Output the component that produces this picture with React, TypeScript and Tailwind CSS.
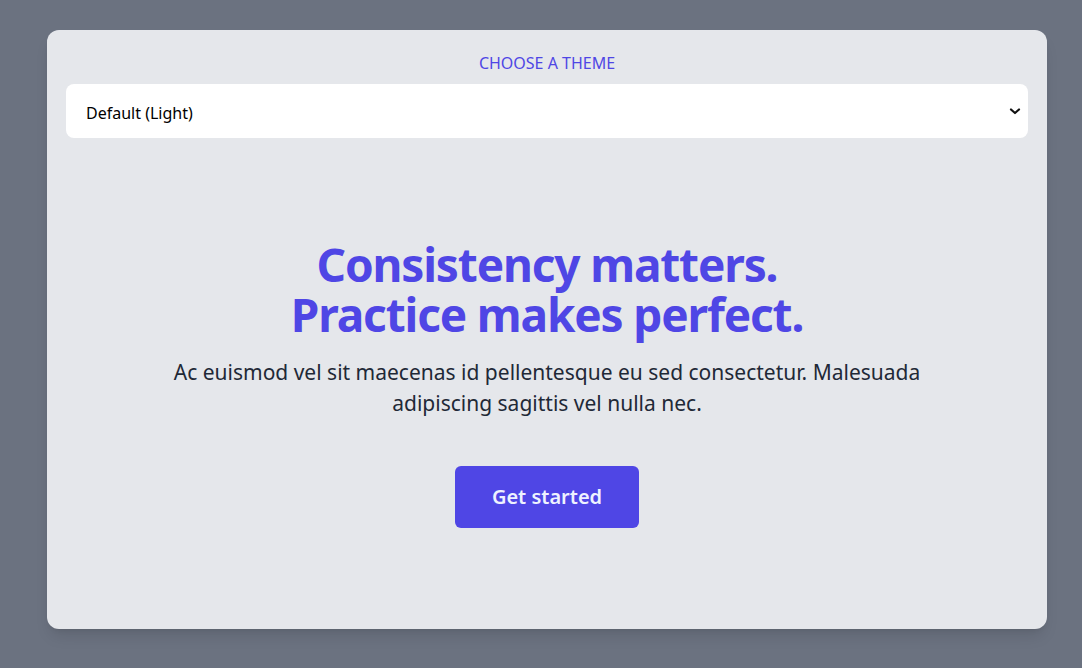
import React from 'react'

export default function App() {
  return (
    <div
      className="flex min-h-[668px] w-full items-start bg-[#6b7280] pl-[47px] pt-[30px]"
      style={{ fontFamily: '"Noto Sans", "Open Sans", sans-serif' }}
    >
      <div className="flex h-[599px] w-[1000px] flex-col rounded-xl bg-[#e5e7eb] px-[19px] pt-[20px] shadow-lg">
        <label className="block text-center text-base leading-[26px] uppercase text-[#4f46e5]">
          Choose a theme
        </label>
        <div className="relative mt-[8px]">
          <select className="h-[54px] w-full appearance-none rounded-lg bg-white pl-[20px] pt-[3px] text-base text-black outline-none">
            <option>Default (Light)</option>
            <option>Dark</option>
          </select>
          <svg
            className="pointer-events-none absolute right-[7px] top-1/2 h-[12px] w-[12px] -translate-y-1/2"
            viewBox="0 0 12 12"
            fill="none"
            stroke="#111"
            strokeWidth="2.2"
            strokeLinecap="round"
            strokeLinejoin="round"
          >
            <path d="M2 4.5 L6 8 L10 4.5" />
          </svg>
        </div>

        <div className="flex flex-1 flex-col items-center justify-center text-center">
          <h1 className="text-[46px] font-bold leading-[50px] tracking-tight text-[#4f46e5]">
            Consistency matters.
            <br />
            Practice makes perfect.
          </h1>
          <p className="mt-[18px] max-w-[800px] text-[21px] leading-[31px] text-[#1f2937]">
            Ac euismod vel sit maecenas id pellentesque eu sed consectetur. Malesuada adipiscing sagittis vel nulla nec.
          </p>
          <button className="mt-[47px] h-[62px] w-[184px] rounded-md bg-[#4f46e5] text-[20px] font-semibold text-[#eef2ff]">
            Get started
          </button>
        </div>
      </div>
    </div>
  )
}
